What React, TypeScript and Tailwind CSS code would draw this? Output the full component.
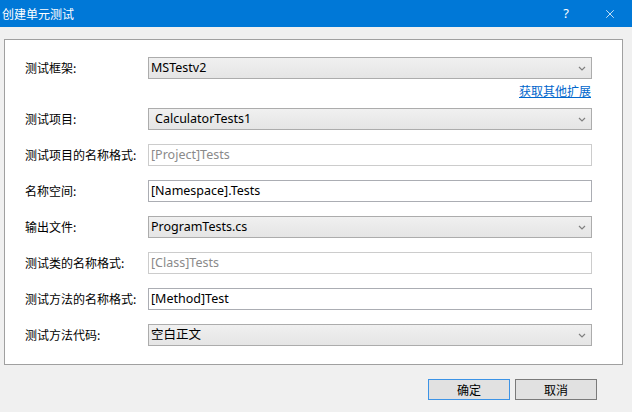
import { X } from "lucide-react";

const cjk = { fontFamily: '"Microsoft YaHei UI", "Noto Sans CJK SC", sans-serif' };
const ui = { fontFamily: '"Segoe UI", "Noto Sans", "Noto Sans CJK SC", sans-serif' };

function Chevron() {
  return (
    <svg width="8" height="5" viewBox="0 0 8 5" className="shrink-0">
      <path d="M1 1 L4 4 L7 1" fill="none" stroke="#808080" strokeWidth="1.2" />
    </svg>
  );
}

function Select({ value, indent = false }: { value: string; indent?: boolean }) {
  return (
    <div className="flex h-[22px] flex-1 items-center justify-between border border-[#acacac] bg-gradient-to-b from-[#f0f0f0] to-[#e5e5e5] pr-[5px]">
      <span className={`text-[12.5px] text-black ${indent ? "pl-[6px]" : "pl-[2px]"}`} style={ui}>
        {value}
      </span>
      <Chevron />
    </div>
  );
}

function Input({ value, disabled = false }: { value: string; disabled?: boolean }) {
  return (
    <div
      className={`flex h-[22px] flex-1 items-center border bg-white pl-[2px] text-[12.5px] ${
        disabled ? "border-[#cccccc] text-[#8a8a8a]" : "border-[#abadb3] text-black"
      }`}
      style={ui}
    >
      {value}
    </div>
  );
}

function Row({ label, children }: { label: string; children: React.ReactNode }) {
  return (
    <div className="flex items-center">
      <div className="w-[123px] text-[12px] text-black" style={cjk}>
        {label}
      </div>
      {children}
    </div>
  );
}

export default function App() {
  return (
    <div className="flex h-[412px] w-[632px] flex-col bg-[#f0f0f0]">
      {/* 标题栏 */}
      <div className="flex h-[27px] items-center bg-[#0078d7] text-white">
        <span className="pl-[2px] text-[12px]" style={cjk}>
          创建单元测试
        </span>
        <span className="ml-auto mr-[34px] text-[13px]" style={ui}>
          ?
        </span>
        <X size={14} strokeWidth={1.3} className="mr-[15px]" />
      </div>

      <div className="ml-[4px] mt-[12px] h-[326px] w-[619px] border border-[#a0a0a0] bg-white pl-[20px] pr-[30px] pt-[17px]">
        <Row label="测试框架:">
          <Select value="MSTestv2" />
        </Row>
        <div className="mt-[3px] flex h-[16px] justify-end pr-[1px]">
          <a href="#" className="text-[12px] text-[#0066cc] underline" style={cjk}>
            获取其他扩展
          </a>
        </div>
        <div className="mt-[10px] flex flex-col gap-[14px]">
          <Row label="测试项目:">
            <Select value="CalculatorTests1" indent />
          </Row>
          <Row label="测试项目的名称格式:">
            <Input value="[Project]Tests" disabled />
          </Row>
          <Row label="名称空间:">
            <Input value="[Namespace].Tests" />
          </Row>
          <Row label="输出文件:">
            <Select value="ProgramTests.cs" />
          </Row>
          <Row label="测试类的名称格式:">
            <Input value="[Class]Tests" disabled />
          </Row>
          <Row label="测试方法的名称格式:">
            <Input value="[Method]Test" />
          </Row>
          <Row label="测试方法代码:">
            <Select value="空白正文" />
          </Row>
        </div>
      </div>

      <div className="mt-[14px] flex justify-end gap-[5px] pr-[35px]">
        <button
          className="h-[21px] w-[82px] border border-[#3c93e6] bg-[#e1e1e1] text-[12px] text-black"
          style={cjk}
        >
          确定
        </button>
        <button
          className="h-[21px] w-[82px] border border-[#7a7a7a] bg-[#e1e1e1] text-[12px] text-black"
          style={cjk}
        >
          取消
        </button>
      </div>
    </div>
  );
}
